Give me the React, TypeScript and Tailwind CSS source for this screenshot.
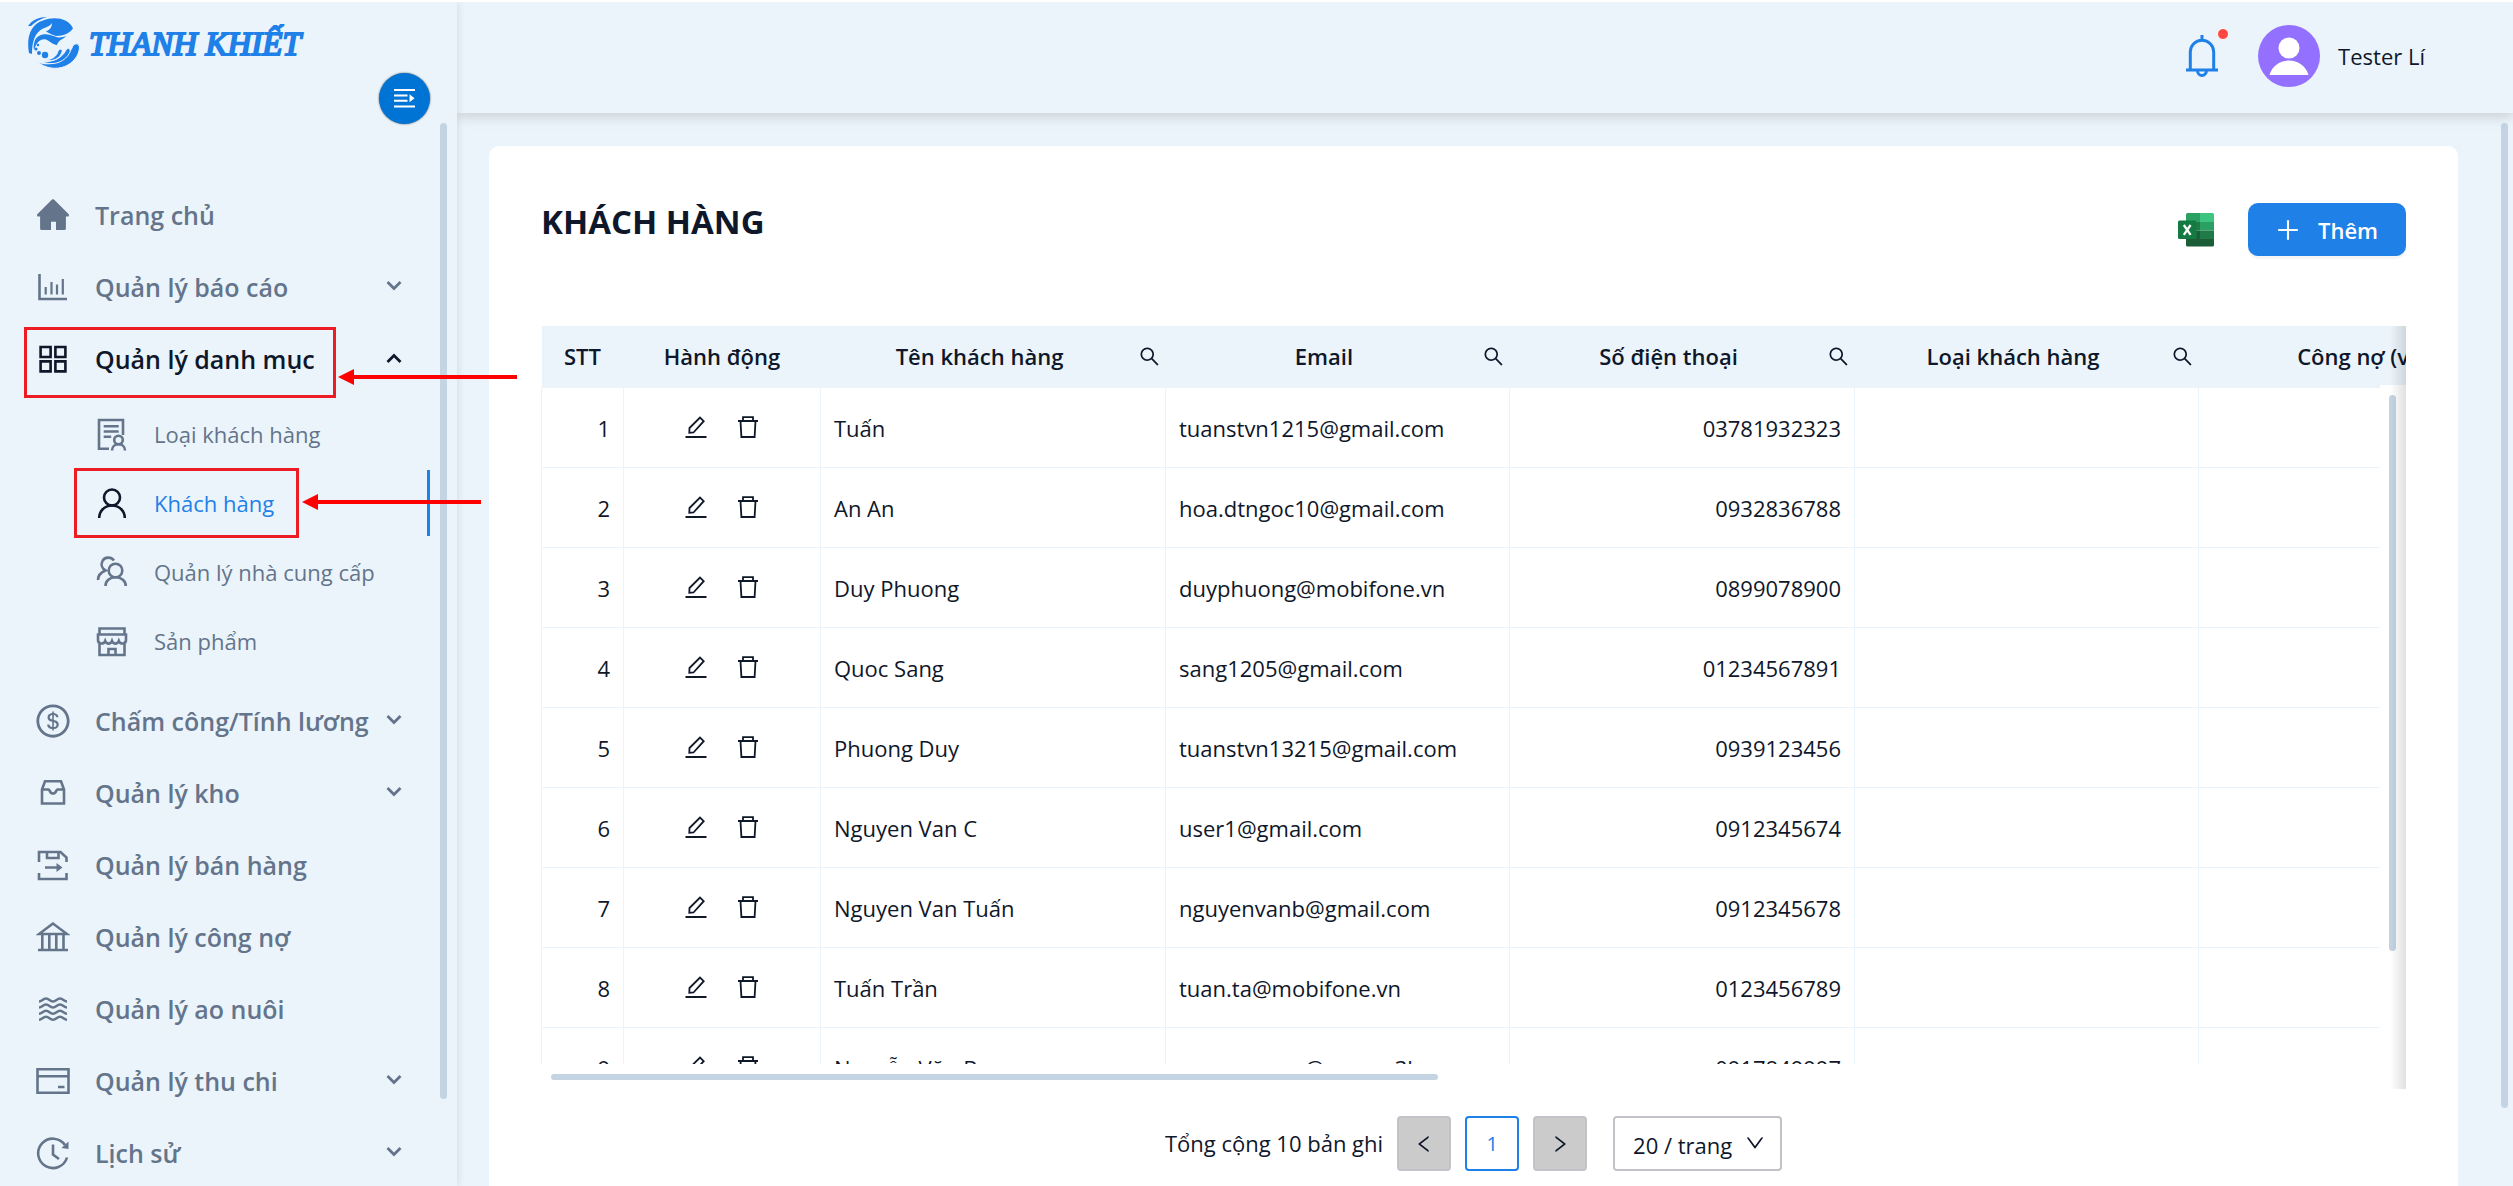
import React from "react";
import {
  AiOutlineDollar,
  AiOutlineDown,
  AiOutlineLeft,
  AiOutlinePlus,
  AiOutlineRight,
  AiOutlineSearch,
} from "react-icons/ai";

const icons = {
  home: (
    <path
      d="M16 1.6a1.5 1.5 0 0 1 2 0L32.5 16a1.5 1.5 0 0 1-1 2.6h-1.6v12a1.5 1.5 0 0 1-1.5 1.5H20v-8.300h-5v8.300H5.600A1.500 1.500 0 0 1 4.100 30.600v-12H2.500a1.500 1.500 0 0 1-1-2.600z"
      fill="currentColor"
      stroke="none"
    />
  ),
  report: (
    <>
      <path d="M3.500 4V29H31" />
      <path d="M9.700 17v7.500M15.500 12v12.500M21 14.500v10M26.800 9v15.500" strokeWidth="2.200" />
    </>
  ),
  category: (
    <path d="M4.600 5h10v10h-10zM19.400 5h10v10h-10zM4.600 19.400h10v10h-10zM19.400 19.400h10v10h-10z" />
  ),
  stock: (
    <path d="M6 13.500 9 5.300h16l3 8.200v14H6zM6 13.500h6.500c1.500 0 1 4 4.500 4s3-4 4.500-4H28" />
  ),
  sales: (
    <>
      <path d="M3 14V4h21.500l6 5.500V14M11 4v6h11.500V4M3 25v6h27.500v-6M9 19.500h13" />
      <path d="M20.500 15l6 4.500-6 4.500z" fill="currentColor" stroke="none" />
    </>
  ),
  debt: (
    <path d="M17 3.500 3 14h28zM6.300 14v16M13.300 14v16M20.300 14v16M27.500 14v16M2 30h30" />
  ),
  pond: (
    <path d="M3 9.500c3 0 4-3 7-3s4 3 7 3 4-3 7-3 4 3 7 3M3 15.500c3 0 4-3 7-3s4 3 7 3 4-3 7-3 4 3 7 3M3 21.800c3 0 4-3 7-3s4 3 7 3 4-3 7-3 4 3 7 3M3 27.800c3 0 4-3 7-3s4 3 7 3 4-3 7-3 4 3 7 3" />
  ),
  cash: (
    <path d="M1.500 5.300h31v23.500h-31zM1.500 12.300h31M22 23h6.500" />
  ),
  history: (
    <>
      <path d="M31 21.500A14.700 14.700 0 1 1 29 9M17 8.500V18.500l6 4.500" />
      <path d="M32.500 5.500v7.500l-7-1z" fill="currentColor" stroke="none" />
    </>
  ),
  customerType: (
    <>
      <path d="M14 31.700H4V3h24v15M8.700 9.300h15M8.700 14.500h15M8.700 19.800h7.500" />
      <circle cx="23.500" cy="23" r="4.300" />
      <path d="M17 33.500c0-4 3-6.200 6.500-6.200s6.500 2.200 6.500 6.200" />
    </>
  ),
  customer: (
    <>
      <circle cx="17" cy="11.500" r="8" />
      <path d="M4.200 32C4.200 24.500 10 19.500 17 19.500S29.800 24.500 29.800 32" />
    </>
  ),
  supplier: (
    <>
      <circle cx="20.500" cy="15.500" r="6.800" />
      <path d="M10.500 31c0-5 4-8.700 10-8.700s10.300 3.700 10.300 8.700M3 25c0-4.500 2.500-7.500 7.500-9.500-3.500-2-4.800-6-3-9.500 2.200-4.300 8.500-4.500 11.500-.5" />
    </>
  ),
  product: (
    <>
      <path d="M4.500 10.500V4.500h25v6M3 10.500h28V16c0 4.500-6 4.500-7.200 1-1.300 3.500-5.500 3.500-6.800 0-1.300 3.500-5.500 3.500-6.800 0C9 20.500 3 20.500 3 16zM4.500 19v12h25V19" />
      <path d="M13.500 31v-6h7v6" />
    </>
  ),
};

type IconName = keyof typeof icons;

const MenuIcon = ({ name }: { name: IconName | "salary" }) =>
  name === "salary" ? (
    <AiOutlineDollar className="-mx-0.5 size-[38px] shrink-0" />
  ) : (
    <svg
      viewBox="0 0 34 34"
      className="size-[34px] shrink-0"
      fill="none"
      stroke="currentColor"
      strokeWidth="2.600"
    >
      {icons[name]}
    </svg>
  );

const Chevron = ({ up }: { up?: boolean }) => (
  <svg
    viewBox="0 0 16 16"
    className="-ml-4 size-4 shrink-0"
    fill="none"
    stroke="currentColor"
    strokeWidth="2.800"
  >
    <path d={up ? "M1.500 11 8 4.500l6.500 6.500" : "M1.500 3 8 9.500 14.500 3"} />
  </svg>
);

const Logo = () => (
  <svg viewBox="0 0 52 52" className="size-[52px] shrink-0" fill="#1f80e8">
    <path d="M0 9C4 3 11 0 19 0 12 2 7 5 3 9z" />
    <path d="M1 36C-2 20 3 7 15 3.500 26-1 41 1 45 11.500 42 16 36 19 28 19c-4-1-7-3-10-4.500 4-1.500 6-4.500 6-8.500-2 3-5 4-9 5.500C7 16 4 24 4 37z" />
    <path d="M7 23c5-8 14-6 20-3.500 3 1.500 8 1 11-.5-3 4-7 3-9 9-4 0-7-4-11-5.500-4-1-9 1-12 10.500-1-3 0-7 1-10z" />
    <circle cx="17" cy="38" r="3.200" />
    <circle cx="11" cy="36" r="2" />
    <circle cx="8" cy="32" r="1.600" />
    <circle cx="10" cy="28" r="1.200" />
    <g stroke="#ebf4fa" strokeWidth="1">
      <path d="M8 44c10 6 28 3 36-13 1-5 7.500-6 7.500 0C50 47 28 60 8 44z" />
      <path d="M14 44.500c10 1 20-3 24-11.500 2-3 5-1 4 2-4 9-16 15-28 9.500z" />
      <path d="M18 43c7-1 11-4 12-9 1.500-3 5-2 4 1-2 6-8 10-16 8z" />
    </g>
  </svg>
);

type MenuItem = {
  icon: IconName | "salary";
  label: string;
  arrow?: boolean;
  children?: { icon: IconName; label: string; active?: boolean }[];
};

const menu: MenuItem[] = [
  { icon: "home", label: "Trang chủ" },
  { icon: "report", label: "Quản lý báo cáo", arrow: true },
  {
    icon: "category",
    label: "Quản lý danh mục",
    arrow: true,
    children: [
      { icon: "customerType", label: "Loại khách hàng" },
      { icon: "customer", label: "Khách hàng", active: true },
      { icon: "supplier", label: "Quản lý nhà cung cấp" },
      { icon: "product", label: "Sản phẩm" },
    ],
  },
  { icon: "salary", label: "Chấm công/Tính lương", arrow: true },
  { icon: "stock", label: "Quản lý kho", arrow: true },
  { icon: "sales", label: "Quản lý bán hàng" },
  { icon: "debt", label: "Quản lý công nợ" },
  { icon: "pond", label: "Quản lý ao nuôi" },
  { icon: "cash", label: "Quản lý thu chi", arrow: true },
  { icon: "history", label: "Lịch sử", arrow: true },
];

const Arrow = () => (
  <svg viewBox="0 0 179 16" className="h-4 w-[179px]" fill="#ff0000">
    <path d="M0 8 16 0v6h163v4H16v6z" />
  </svg>
);

const Sidebar = () => (
  <aside className="relative z-20 flex w-[457px] shrink-0 flex-col bg-[#ebf4fa] shadow-[1px_0_8px_rgba(0,0,0,0.1)]">
    <a href="#" className="flex items-center gap-[9px] pl-7 pt-[15px]">
      <Logo />
      <span className="whitespace-nowrap pt-0.5 font-['Liberation_Serif',serif] text-[33px] italic leading-10 text-[#1f80e8] [-webkit-text-stroke:2px_#1f80e8]">
        THANH KHIẾT
      </span>
    </a>
    <div className="flex justify-end pr-[27px] pt-1">
      <button
        aria-label="Thu gọn menu"
        className="flex size-[51px] items-center justify-center rounded-full bg-[#0074d4] shadow-[0_0_2px_rgba(0,0,0,0.7)]"
      >
        <svg viewBox="0 0 21 19" className="h-[19px] w-[21px]" fill="#fff">
          <path d="M0 0h21v2H0zM0 5.500h13.500v2H0zM0 10.800h13.500v2H0zM0 16.500h21v2H0zM15.500 5.300 20.500 9.200l-5 4z" />
        </svg>
      </button>
    </div>
    <nav className="mt-[55px]">
      <ul>
        {menu.map((item) => (
          <li key={item.label}>
            <a
              href="#"
              className={`relative flex h-[72px] items-center gap-[25px] whitespace-nowrap pl-9 pr-[55px] text-[25px] font-semibold ${
                item.children ? "text-[#0f172a]" : "text-[#64748b]"
              }`}
            >
              <MenuIcon name={item.icon} />
              <span className="min-w-0 flex-1 pt-0.5">{item.label}</span>
              {item.arrow && <Chevron up={!!item.children} />}
              {item.children && (
                <>
                  <span className="absolute left-6 top-1 h-[71px] w-[312px] border-3 border-[#ed1c24]" />
                  <span className="absolute left-[338px] top-[46px]">
                    <Arrow />
                  </span>
                </>
              )}
            </a>
            {item.children && (
              <ul className="pb-2.5 pt-1">
                {item.children.map((sub) => (
                  <li key={sub.label}>
                    <a
                      href="#"
                      className={`relative flex h-[69px] items-center gap-[25px] whitespace-nowrap pl-[95px] text-[22px] ${
                        sub.active ? "text-[#1f80e8]" : "text-[#64748b]"
                      }`}
                    >
                      <span className={sub.active ? "text-[#0f172a]" : ""}>
                        <MenuIcon name={sub.icon} />
                      </span>
                      <span className="pt-0.5">{sub.label}</span>
                      {sub.active && (
                        <>
                          <span className="absolute right-[27px] top-0.5 h-[66px] w-[3px] bg-[#1f80e8]" />
                          <span className="absolute left-[74px] top-0 h-[70px] w-[225px] border-3 border-[#ed1c24]" />
                          <span className="absolute left-[302px] top-[26px]">
                            <Arrow />
                          </span>
                        </>
                      )}
                    </a>
                  </li>
                ))}
              </ul>
            )}
          </li>
        ))}
      </ul>
    </nav>
    <span className="absolute right-2.5 top-[121px] -z-10 h-[976px] w-[7px] rounded-full bg-[#c5d4e2]" />
  </aside>
);

const Header = () => (
  <header className="relative z-10 flex h-[111px] shrink-0 items-center justify-end bg-[#ebf4fa] pb-1 pr-[88px] shadow-[0_2px_14px_rgba(0,0,0,0.18)]">
    <button aria-label="Thông báo" className="relative mr-10">
      <svg
        viewBox="0 0 32 42"
        className="h-[42px] w-8"
        fill="none"
        stroke="#1f80e8"
        strokeWidth="3"
      >
        <path d="M4.300 34.500V17a11.700 11.700 0 0 1 23.400 0v17.500M0 35h32M16 0v5M11.500 35.500a4.500 5 0 0 0 9 0" />
      </svg>
      <span className="absolute -right-[11px] -top-[7px] size-3 rounded-full border border-white bg-[#ff4742]" />
    </button>
    <button className="flex items-center gap-[18px] text-[22px] text-[#0f172a]">
      <svg viewBox="0 0 62 62" className="size-[62px]">
        <circle cx="31" cy="31" r="31" fill="#9370ff" />
        <circle cx="31" cy="23" r="10.500" fill="#fff" />
        <path d="M11.500 50C14 41 22 35.500 31 35.500S48 41 50.500 50z" fill="#fff" />
      </svg>
      <span className="pt-0.5">Tester Lí</span>
    </button>
  </header>
);

const ExcelIcon = () => (
  <svg viewBox="0 0 36 34" className="h-[34px] w-9">
    <path d="M9.500 0H22v9H8V1.500A1.500 1.500 0 0 1 9.500 0z" fill="#2ba063" />
    <path d="M22 0h12.500A1.500 1.500 0 0 1 36 1.500V9H22z" fill="#3dc481" />
    <path d="M8 9h14v8.500H8z" fill="#1f7a48" />
    <path d="M22 9h14v8.500H22z" fill="#2ba063" />
    <path d="M8 17.500h14V26H8z" fill="#17613a" />
    <path d="M22 17.500h14V26H22z" fill="#1f7a48" />
    <path d="M8 26h28v6a1.500 1.500 0 0 1-1.500 1.500h-25A1.500 1.500 0 0 1 8 32z" fill="#1c5c37" />
    <rect y="7.500" width="18.500" height="18.500" rx="1.500" fill="#157a41" />
    <path d="M5.800 12l6.800 9.800M12.600 12l-6.800 9.800" stroke="#fff" strokeWidth="2.300" />
  </svg>
);

const EditIcon = () => (
  <svg viewBox="0 0 22 22" className="size-[22px]" fill="none" stroke="currentColor" strokeWidth="1.800">
    <path d="M.5 21h21M4.300 16.800l.2-4.800L15 1.500l3.700 3.700L8.500 16.500z" />
  </svg>
);

const DeleteIcon = () => (
  <svg viewBox="0 0 22 22" className="size-[22px]" fill="none" stroke="currentColor" strokeWidth="1.800">
    <path d="M1 5h20M6 5V1.200h10V5M3.500 5l.9 16h13.200l.9-16" />
  </svg>
);

const columns = [
  { title: "STT", width: "w-[82px]" },
  { title: "Hành động", width: "w-[197px]" },
  { title: "Tên khách hàng", width: "w-[345px]", search: true },
  { title: "Email", width: "w-[344px]", search: true },
  { title: "Số điện thoại", width: "w-[345px]", search: true },
  { title: "Loại khách hàng", width: "w-[344px]", search: true },
  { title: "Công nợ (vnđ)", width: "w-[344px]" },
];

const customers = [
  { name: "Tuấn", email: "tuanstvn1215@gmail.com", phone: "03781932323" },
  { name: "An An", email: "hoa.dtngoc10@gmail.com", phone: "0932836788" },
  { name: "Duy Phuong", email: "duyphuong@mobifone.vn", phone: "0899078900" },
  { name: "Quoc Sang", email: "sang1205@gmail.com", phone: "01234567891" },
  { name: "Phuong Duy", email: "tuanstvn13215@gmail.com", phone: "0939123456" },
  { name: "Nguyen Van C", email: "user1@gmail.com", phone: "0912345674" },
  { name: "Nguyen Van Tuấn", email: "nguyenvanb@gmail.com", phone: "0912345678" },
  { name: "Tuấn Trần", email: "tuan.ta@mobifone.vn", phone: "0123456789" },
  { name: "Nguyễn Văn B", email: "nguyenvano@yopma3l.com", phone: "0917849997" },
];

const CustomerTable = () => (
  <div className="relative mt-[70px] overflow-hidden pb-[25px]">
    <div className="h-[738px] overflow-hidden">
      <table className="w-[2001px] table-fixed border-collapse text-[22px] text-[#0f172a]">
        <thead>
          <tr className="h-[61px] bg-[#ebf4fa]">
            {columns.map((col) => (
              <th key={col.title} className={`${col.width} whitespace-nowrap px-[13px] py-0 font-semibold`}>
                {col.search ? (
                  <div className="flex items-center gap-3">
                    <span className="flex-1 text-center">{col.title}</span>
                    <button aria-label={`Tìm ${col.title}`} className="-mr-2">
                      <AiOutlineSearch className="size-[23px]" />
                    </button>
                  </div>
                ) : (
                  col.title
                )}
              </th>
            ))}
          </tr>
        </thead>
        <tbody>
          {customers.map((row, i) => (
            <tr key={row.phone} className="h-20">
              <td className="border border-[#ebf4fa] px-[13px] pb-0 pt-0.5 text-right">{i + 1}</td>
              <td className="border border-[#ebf4fa] py-0">
                <div className="flex justify-center gap-[30px]">
                  <button aria-label="Sửa">
                    <EditIcon />
                  </button>
                  <button aria-label="Xóa">
                    <DeleteIcon />
                  </button>
                </div>
              </td>
              <td className="border border-[#ebf4fa] px-[13px] pb-0 pt-0.5">{row.name}</td>
              <td className="border border-[#ebf4fa] px-[13px] pb-0 pt-0.5">{row.email}</td>
              <td className="border border-[#ebf4fa] px-[13px] pb-0 pt-0.5 text-right">{row.phone}</td>
              <td className="border border-[#ebf4fa]" />
              <td className="border border-[#ebf4fa]" />
            </tr>
          ))}
        </tbody>
      </table>
    </div>
    <div className="absolute bottom-0 right-0 top-[59px] w-[26px] bg-white">
      <span className="absolute left-[9px] top-2.5 h-[556px] w-[7px] rounded-full bg-[#c5d4e2]" />
    </div>
    <span className="absolute bottom-[9px] left-[10px] h-1.5 w-[887px] rounded-full bg-[#c5d4e2]" />
    <span className="absolute inset-y-0 right-0 w-4 bg-linear-to-l from-black/12 to-transparent" />
  </div>
);

const Pagination = () => (
  <div className="mt-[27px] flex items-center justify-center gap-3.5 whitespace-nowrap text-[22px] text-[#0f172a]">
    <span>Tổng cộng 10 bản ghi</span>
    <button aria-label="Trang trước" className="flex h-[55px] w-[54px] items-center justify-center rounded-sm border-2 border-[#c2c2c8] bg-[#cbcbcb]">
      <AiOutlineLeft className="size-[22px]" />
    </button>
    <button className="flex h-[55px] w-[54px] items-center justify-center rounded-sm border-2 border-[#1f80e8] text-xl text-[#1f80e8]">
      1
    </button>
    <button aria-label="Trang sau" className="flex h-[55px] w-[54px] items-center justify-center rounded-sm border-2 border-[#c2c2c8] bg-[#cbcbcb]">
      <AiOutlineRight className="size-[22px]" />
    </button>
    <div className="relative ml-3">
      <select
        aria-label="Số bản ghi mỗi trang"
        className="h-[55px] w-[169px] appearance-none rounded-sm border-2 border-[#c2c2c8] bg-white pl-[18px] pt-1"
      >
        <option>20 / trang</option>
      </select>
      <AiOutlineDown className="pointer-events-none absolute right-4 top-4 size-[22px]" />
    </div>
  </div>
);

const App = () => {
  return (
    <div className="flex h-screen overflow-hidden border-t-2 border-white bg-[#ebf4fa] font-['Open_Sans','Noto_Sans',sans-serif]">
      <Sidebar />
      <div className="relative flex min-w-0 flex-1 flex-col">
        <Header />
        <main className="flex flex-1 flex-col pl-8 pr-[55px] pt-[33px]">
          <section className="flex-1 rounded-t-[10px] bg-white px-[52px] pt-[57px]">
            <div className="flex h-[53px] items-center">
              <h1 className="mb-4 text-[33px] font-bold leading-10 text-[#0f172a]">KHÁCH HÀNG</h1>
              <button aria-label="Xuất Excel" className="ml-auto mr-[34px]">
                <ExcelIcon />
              </button>
              <button className="flex h-[53px] w-[158px] items-center gap-4 rounded-[10px] bg-[#1f80e8] pl-[26px] text-[22px] font-semibold text-white shadow-[0_3px_0_rgba(0,0,0,0.04)]">
                <AiOutlinePlus className="size-[28px]" />
                <span className="pt-0.5">Thêm</span>
              </button>
            </div>
            <CustomerTable />
            <Pagination />
          </section>
        </main>
        <span className="absolute right-[5px] top-[121px] h-[985px] w-[7px] rounded-full bg-[#c5d4e2]" />
      </div>
    </div>
  );
};

export default App;
